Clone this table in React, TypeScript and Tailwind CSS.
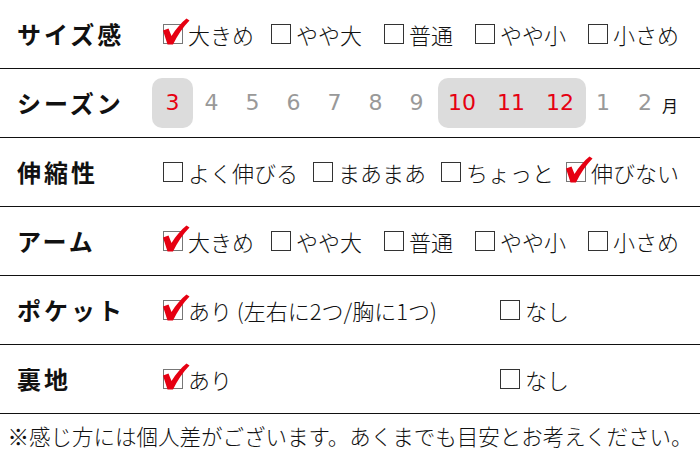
import React from "react";

const JP = { fontFamily: '"Noto Sans CJK JP", "Noto Sans", sans-serif' };
const NUM = { fontFamily: '"DejaVu Sans", "Noto Sans", sans-serif' };

function Box({ checked }: { checked?: boolean }) {
  return (
    <div className={`relative w-[20px] h-[20px] shrink-0 border-[1.5px] ${checked ? "border-[#777]" : "border-[#333]"} bg-white`}>
      {checked && (
        <svg className="absolute left-[-2px] top-[-7px]" width="28" height="28" viewBox="0 0 28 28">
          <path
            d="M1 12.5 L6.5 10.5 L9.5 18 C14 10.5 19 5 24.5 0.5 L27.5 2.5 C21 9 15.5 17 11 26.5 L5.5 26.5 Z"
            fill="#e60012"
          />
        </svg>
      )}
    </div>
  );
}

function Opt({ label, checked, w }: { label: string; checked?: boolean; w?: string }) {
  return (
    <div className={`flex items-center gap-[5px] shrink-0 ${w ?? ""}`}>
      <Box checked={checked} />
      <span className="text-[22px] font-light leading-none text-[#111] whitespace-nowrap">{label}</span>
    </div>
  );
}

function Row({ label, children }: { label: string; children: React.ReactNode }) {
  return (
    <div className="flex items-center h-[69px] border-b-[1.5px] border-[#111]">
      <div className="w-[163px] shrink-0 pl-[17px] text-[24px] font-bold tracking-[3px] leading-none text-[#111]">
        {label}
      </div>
      <div className="flex items-center">{children}</div>
    </div>
  );
}

function Num({ n, red, w }: { n: string; red?: boolean; w: string }) {
  return (
    <div className={`${w} shrink-0 text-center text-[22px] leading-none ${red ? "text-[#e60012]" : "text-[#999]"}`} style={NUM}>
      {n}
    </div>
  );
}

export default function App() {
  return (
    <div className="w-[700px] h-[465px] bg-white overflow-hidden" style={JP}>
      <Row label="サイズ感">
        <Opt label="大きめ" checked w="w-[108px]" />
        <Opt label="やや大" w="w-[113px]" />
        <Opt label="普通" w="w-[91px]" />
        <Opt label="やや小" w="w-[113px]" />
        <Opt label="小さめ" />
      </Row>
      <div className="flex items-center h-[69px] border-b-[1.5px] border-[#111]">
        <div className="w-[152px] shrink-0 pl-[17px] text-[24px] font-bold tracking-[3px] leading-none text-[#111]">
          シーズン
        </div>
        <div className="flex items-center">
          <div className="w-[41px] h-[50px] mr-[-2px] rounded-[10px] bg-[#dcdcdc] flex items-center justify-center">
            <Num n="3" red w="w-[41px]" />
          </div>
          <Num n="4" w="w-[41px]" />
          <Num n="5" w="w-[41px]" />
          <Num n="6" w="w-[41px]" />
          <Num n="7" w="w-[41px]" />
          <Num n="8" w="w-[41px]" />
          <Num n="9" w="w-[41px]" />
          <div className="ml-[1px] w-[148px] h-[50px] rounded-[10px] bg-[#dcdcdc] flex items-center gap-[1px]">
            <Num n="10" red w="w-[48px]" />
            <Num n="11" red w="w-[48px]" />
            <Num n="12" red w="w-[48px]" />
          </div>
          <Num n="1" w="w-[34px]" />
          <div className="ml-[8px] flex items-center">
            <Num n="2" w="w-[34px]" />
            <span className="text-[16px] leading-none text-[#111] mt-[3px]">月</span>
          </div>
        </div>
      </div>
      <Row label="伸縮性">
        <Opt label="よく伸びる" w="w-[150px]" />
        <Opt label="まあまあ" w="w-[128px]" />
        <Opt label="ちょっと" w="w-[125px]" />
        <Opt label="伸びない" checked />
      </Row>
      <Row label="アーム">
        <Opt label="大きめ" checked w="w-[108px]" />
        <Opt label="やや大" w="w-[113px]" />
        <Opt label="普通" w="w-[91px]" />
        <Opt label="やや小" w="w-[113px]" />
        <Opt label="小さめ" />
      </Row>
      <Row label="ポケット">
        <Opt label="あり (左右に2つ/胸に1つ)" checked w="w-[337px]" />
        <Opt label="なし" />
      </Row>
      <Row label="裏地">
        <Opt label="あり" checked w="w-[337px]" />
        <Opt label="なし" />
      </Row>
      <div className="h-[44px] flex items-center justify-center text-[21.5px] font-light leading-none text-[#111] whitespace-nowrap">
        ※感じ方には個人差がございます。あくまでも目安とお考えください。
      </div>
    </div>
  );
}
